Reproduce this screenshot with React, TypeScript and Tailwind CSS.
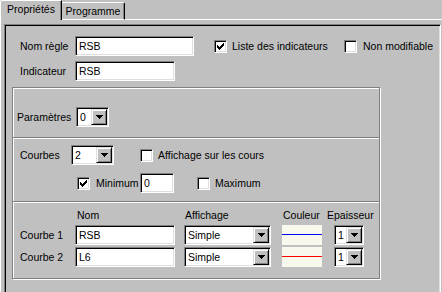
import React from 'react'

const sunken =
  'border border-[#808080] border-r-white border-b-white shadow-[inset_1px_1px_0_#000,inset_-1px_-1px_0_#dfdfdf]'
const raised =
  'border border-[#dfdfdf] border-r-black border-b-black shadow-[inset_1px_1px_0_#fff,inset_-1px_-1px_0_#808080] bg-[#c0c0c0]'

function Edit({ value, className }: { value: string; className: string }) {
  return (
    <div className={`${sunken} h-[20px] bg-white pl-[3px] flex items-center ${className}`}>
      <span>{value}</span>
    </div>
  )
}

function Combo({ value, className }: { value: string; className: string }) {
  return (
    <div className={`${sunken} h-[20px] bg-white p-px flex ${className}`}>
      <span className="flex-1 flex items-center pl-[2px] overflow-hidden">{value}</span>
      <div className={`${raised} w-[16px] h-full flex items-center justify-center`}>
        <svg width="7" height="4" viewBox="0 0 7 4" shapeRendering="crispEdges">
          <path d="M0 0h7v1h-7z M1 1h5v1h-5z M2 2h3v1h-3z M3 3h1v1h-1z" fill="#000" />
        </svg>
      </div>
    </div>
  )
}

function CheckBox({ checked }: { checked?: boolean }) {
  return (
    <div className={`${sunken} w-[13px] h-[13px] bg-white p-px shrink-0`}>
      {checked && (
        <svg width="9" height="9" viewBox="0 0 9 9" shapeRendering="crispEdges" className="block">
          <path
            d="M7 1h1v1h-1z M6 2h2v1h-2z M1 3h1v1h-1z M5 3h3v1h-3z M1 4h2v1h-2z M4 4h3v1h-3z M1 5h5v1h-5z M2 6h3v1h-3z M3 7h1v1h-1z"
            fill="#000"
          />
        </svg>
      )}
    </div>
  )
}

function Separator() {
  return (
    <div>
      <div className="h-px bg-[#808080]" />
      <div className="h-px bg-white" />
    </div>
  )
}

function CurveRow({ label, name, color }: { label: string; name: string; color: string }) {
  return (
    <div className="flex items-center h-[20px]">
      <span className="w-[55px]">{label}</span>
      <Edit value={name} className="w-[100px]" />
      <Combo value="Simple" className="ml-[9px] w-[87px]" />
      <div className="ml-[11px] w-[40px] h-[20px] bg-[#f8f8ec] pt-[9px]">
        <div className={`h-px ${color}`} />
      </div>
      <Combo value="1" className="ml-[12px] w-[30px]" />
    </div>
  )
}

export default function App() {
  return (
    <div className="w-[442px] h-[292px] overflow-hidden bg-[#c0c0c0] text-black text-[10.5px] leading-[13px] font-['Liberation_Sans',Arial,sans-serif]">
      {/* Tabs */}
      <div className="flex h-[20px]">
        <div className="w-[62px] h-[20px] border-l border-t border-r border-white border-r-black shadow-[inset_-1px_0_0_#808080] rounded-tl-[2px] flex justify-center pt-[2px]">
          Propriétés
        </div>
        <div className="mt-[2px] w-[63px] h-[18px] border-t border-b border-r border-white border-r-black shadow-[inset_-1px_0_0_#808080] rounded-tr-[2px] flex justify-center pt-[2px]">
          Programme
        </div>
        <div className="flex-1 border-b border-white" />
      </div>

      {/* Tab body */}
      <div className="border-l border-white h-[272px] pt-[4px] pl-[3px]">
        <div className={`${sunken} w-[437px] h-[300px]`}>
          {/* Name rows */}
          <div className="pt-[11px] pl-[15px]">
            <div className="flex items-center h-[20px]">
              <span className="w-[55px]">Nom règle</span>
              <Edit value="RSB" className="w-[119px]" />
              <div className="ml-[20px] w-[130px] flex items-center">
                <CheckBox checked />
                <span className="ml-[5px]">Liste des indicateurs</span>
              </div>
              <div className="flex items-center">
                <CheckBox />
                <span className="ml-[6px]">Non modifiable</span>
              </div>
            </div>
            <div className="flex items-center h-[20px] mt-[5px]">
              <span className="w-[55px]">Indicateur</span>
              <Edit value="RSB" className="w-[100px]" />
            </div>
          </div>

          {/* Group box */}
          <div className="mt-[6px] ml-[7px] w-[368px] h-[192px] border border-[#808080] shadow-[1px_1px_0_#fff,inset_1px_1px_0_#fff] flex flex-col">
            <div className="h-[49px] pt-[19px] pl-[4px]">
              <div className="flex items-center">
                <span className="w-[59px]">Paramètres</span>
                <Combo value="0" className="w-[33px]" />
              </div>
            </div>
            <Separator />
            <div className="h-[62px] pt-[6px] pl-[7px]">
              <div className="flex items-center">
                <span className="w-[51px]">Courbes</span>
                <Combo value="2" className="w-[43px]" />
                <div className="ml-[26px]">
                  <CheckBox />
                </div>
                <span className="ml-[5px]">Affichage sur les cours</span>
              </div>
              <div className="flex items-center mt-[8px] h-[20px]">
                <div className="ml-[57px]">
                  <CheckBox checked />
                </div>
                <span className="ml-[6px] w-[44px]">Minimum</span>
                <Edit value="0" className="w-[34px]" />
                <div className="ml-[23px]">
                  <CheckBox />
                </div>
                <span className="ml-[5px]">Maximum</span>
              </div>
            </div>
            <Separator />
            <div className="flex-1 pt-[6px] pl-[7px]">
              <div className="flex h-[13px]">
                <span className="w-[55px]" />
                <span className="w-[100px] pl-[2px]">Nom</span>
                <span className="ml-[9px] w-[87px] pl-px">Affichage</span>
                <span className="ml-[11px] w-[40px] pl-px">Couleur</span>
                <span className="ml-[5px] whitespace-nowrap">Epaisseur</span>
              </div>
              <div className="mt-[3px]">
                <CurveRow label="Courbe 1" name="RSB" color="bg-[#0000ff]" />
              </div>
              <div className="mt-[2px]">
                <CurveRow label="Courbe 2" name="L6" color="bg-[#ff0000]" />
              </div>
            </div>
          </div>
        </div>
      </div>
    </div>
  )
}
